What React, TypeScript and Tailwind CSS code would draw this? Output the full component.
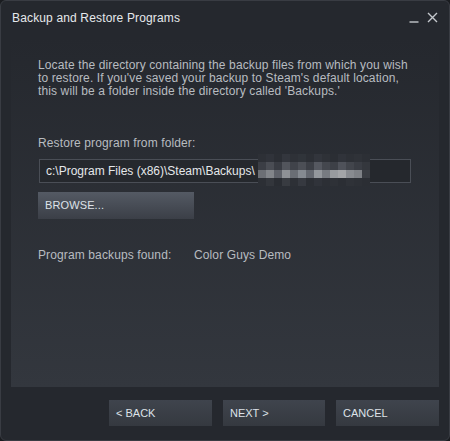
import React from "react";

const blurRows: string[][] = [
  ["#2d3036", "#30333a", "#2b2e34", "#33363d", "#2e3137", "#30343a", "#2c2f35", "#32353c", "#2e3137", "#2b2e34", "#30333a", "#2d3036", "#2f3238", "#2c2f35"],
  ["#3b3e45", "#4a4d54", "#393c43", "#52555c", "#40434a", "#4c4f56", "#3c3f46", "#555860", "#44474e", "#3d4047", "#4f525a", "#42454c", "#3a3d44", "#34373d"],
  ["#6c6f75", "#82858a", "#5f626a", "#8e9196", "#6a6e75", "#858a91", "#646870", "#93979c", "#777b81", "#989b9f", "#a3a5a8", "#888b90", "#7e8186", "#3a3d43"],
  ["#2c2f35", "#33363c", "#2a2d33", "#383b41", "#2d3036", "#363940", "#2b2e34", "#30333a", "#2c2f35", "#2e3137", "#2b2e34", "#2f3238", "#2d3036", "#2b2e34"],
];

function Btn({ label, className }: { label: string; className: string }) {
  return (
    <div
      className={
        "flex items-center pl-[7px] text-[11px] text-[#dde2e8] " + className
      }
    >
      {label}
    </div>
  );
}

export default function App() {
  return (
    <div
      className="w-[450px] h-[441px] bg-[#1a1c20]"
      style={{ fontFamily: '"Liberation Sans", Arial, sans-serif' }}
    >
      <div className="w-full h-full rounded-[6px] border border-[#393c43] bg-[#25282e] flex flex-col overflow-hidden">
        {/* title bar */}
        <div className="h-[37px] shrink-0 flex items-center justify-between pl-[11px] pr-[11px]">
          <span className="text-[12px] tracking-[0.15px] text-[#e6e9ec] -mt-[4px]">
            Backup and Restore Programs
          </span>
          <div className="flex items-end gap-[8px] -mt-[6px]">
            <svg width="10" height="12" viewBox="0 0 10 12">
              <line x1="0.5" y1="11" x2="9.5" y2="11" stroke="#b9bdc2" strokeWidth="1.3" />
            </svg>
            <svg width="11" height="11" viewBox="0 0 11 11">
              <path d="M1 1 L10 10 M10 1 L1 10" stroke="#c4c8cd" strokeWidth="1.4" />
            </svg>
          </div>
        </div>

        {/* panel */}
        <div className="flex-1 mx-[10px] bg-gradient-to-b from-[#25282e] to-[#33373e] pl-[27px] pt-[21px] text-[12px] leading-[13px] tracking-[0.12px] text-[#b8bcc0]">
          <p>
            Locate the directory containing the backup files from which you wish
            <br />
            to restore. If you've saved your backup to Steam's default location,
            <br />
            this will be a folder inside the directory called 'Backups.'
          </p>
          <p className="mt-[39px]">Restore program from folder:</p>
          <div className="relative mt-[9px] ml-[1px] w-[372px] h-[24px] border border-[#4a4e56] bg-[#25282d] flex items-center pl-[6px] tracking-normal text-[#e4e7ea]">
            <span>c:\Program Files (x86)\Steam\Backups\</span>
            <div className="absolute left-[218px] top-[-6px] flex flex-col">
              {blurRows.map((row, i) => (
                <div key={i} className="flex">
                  {row.map((c, j) => (
                    <div key={j} className="w-[8px] h-[8px]" style={{ backgroundColor: c }} />
                  ))}
                </div>
              ))}
            </div>
          </div>
          <Btn
            label="BROWSE..."
            className="mt-[9px] w-[156px] h-[27px] bg-gradient-to-b from-[#545a64] to-[#3b3f47]"
          />
          <div className="mt-[30px] flex">
            <span className="w-[156px]">Program backups found:</span>
            <span>Color Guys Demo</span>
          </div>
        </div>

        {/* bottom buttons */}
        <div className="h-[53px] shrink-0 flex justify-end items-start pt-[13px] pr-[10px] gap-[11px]">
          <Btn label="< BACK" className="w-[103px] h-[26px] bg-gradient-to-b from-[#3f444d] to-[#353940]" />
          <Btn label="NEXT >" className="w-[102px] h-[26px] bg-gradient-to-b from-[#3f444d] to-[#353940]" />
          <Btn label="CANCEL" className="w-[103px] h-[26px] bg-gradient-to-b from-[#3f444d] to-[#353940]" />
        </div>
      </div>
    </div>
  );
}
